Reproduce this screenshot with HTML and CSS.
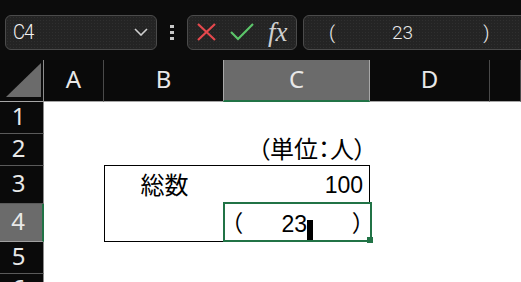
FILE: index.html
```html
<!DOCTYPE html>
<html lang="ja">
<head>
  <meta charset="UTF-8">
  <title>総数</title>
  <link rel="stylesheet" href="styles.css">
</head>
<body>
  <div class="toolbar">
    <div class="namebox">
      <span class="name">C4</span>
      <svg class="chevron" width="14" height="8" viewBox="0 0 14 8">
        <polyline points="1,1 7,7 13,1" fill="none" stroke="#cfcfcf" stroke-width="1.6"/>
      </svg>
    </div>
    <div class="grip"><i></i><i></i><i></i></div>
    <div class="fxbox">
      <svg class="icon" width="19" height="18" viewBox="0 0 19 18">
        <path d="M1 1 L18 17 M18 1 L1 17" stroke="#e5484d" stroke-width="2.2" fill="none"/>
      </svg>
      <svg class="icon check" width="24" height="18" viewBox="0 0 24 18">
        <polyline points="1,9 8,16 23,1" fill="none" stroke="#5cc56a" stroke-width="2.2"/>
      </svg>
      <span class="fx">fx</span>
    </div>
    <div class="formula">
      <span>(</span>
      <span class="f-num">23</span>
      <span class="f-close">)</span>
    </div>
  </div>

  <div class="sheet">
    <div class="row head-row">
      <div class="corner">
        <svg width="35" height="34" viewBox="0 0 35 34"><polygon points="0,34 35,34 35,0" fill="#6b6b6b"/></svg>
      </div>
      <div class="ch">A</div>
      <div class="ch">B</div>
      <div class="ch sel">C</div>
      <div class="ch">D</div>
      <div class="ch"></div>
    </div>
    <div class="row short">
      <div class="rh">1</div>
    </div>
    <div class="row short">
      <div class="rh">2</div>
      <div class="cell unit">（単位：人）</div>
    </div>
    <div class="row tall">
      <div class="rh">3</div>
      <div class="cell label">総数</div>
      <div class="cell total">100</div>
    </div>
    <div class="row tall">
      <div class="rh sel">4</div>
      <div class="cell label-bottom"></div>
      <div class="cell active">
        <span class="paren">（</span>
        <span class="num">23</span>
        <span class="caret"></span>
        <span class="paren close">）</span>
        <span class="handle"></span>
      </div>
    </div>
    <div class="row short">
      <div class="rh">5</div>
    </div>
    <div class="row short">
      <div class="rh">6</div>
    </div>
  </div>
</body>
</html>
```

FILE: styles.css
```css
body {
  margin: 0;
  width: 521px;
  height: 282px;
  overflow: hidden;
  background-color: #0c0c0c;
  font-family: "Noto Sans", sans-serif;
}

/* 数式バー */
.toolbar {
  display: flex;
  align-items: center;
  height: 60px;
  padding: 4px 0 0 5px;
  box-sizing: border-box;
}

.toolbar > * {
  flex-shrink: 0;
}

.namebox,
.fxbox,
.formula {
  height: 35px;
  box-sizing: border-box;
  border: 1px solid #4b4b4b;
  border-radius: 6px;
  background-color: #242424;
  background-image: radial-gradient(#2f2f2f 0.6px, transparent 0.8px);
  background-size: 3px 3px;
  display: flex;
  align-items: center;
}

.namebox {
  width: 152px;
  justify-content: space-between;
  padding: 0 8px 0 7px;
}

.name {
  font-family: "Roboto", sans-serif;
  font-weight: 300;
  font-size: 21px;
  letter-spacing: -1px;
  transform: scaleX(0.88);
  transform-origin: left center;
  color: #f4f4f4;
}

.grip {
  display: flex;
  flex-direction: column;
  gap: 3px;
  margin: 0 13px;
}

.grip i {
  width: 4px;
  height: 3px;
  background-color: #c8c8c8;
}

.fxbox {
  width: 110px;
  padding-left: 9px;
}

.check {
  margin-left: 14px;
}

.fx {
  margin-left: 14px;
  font-family: "Liberation Serif", serif;
  font-style: italic;
  font-size: 27px;
  line-height: 1;
  color: #cfcfcf;
}

.formula {
  margin-left: 6px;
  width: 240px;
  padding-left: 25px;
  font-family: "Roboto", sans-serif;
  font-weight: 300;
  font-size: 19px;
  color: #ececec;
}

.f-num {
  margin-left: 57px;
}

.f-close {
  margin-left: 70px;
}

/* シート */
.row {
  display: grid;
  grid-template-columns: 44px 60px 120px 146px 120px 1fr;
  grid-template-rows: 100%;
  background-color: #fff;
}

.row.short {
  height: 32px;
}

.row.tall {
  height: 38px;
}

.head-row {
  height: 42px;
  background-color: #0a0a0a;
}

.corner,
.ch,
.rh {
  box-sizing: border-box;
  background-color: #0a0a0a;
  color: #e8e8e8;
  font-family: "Noto Sans", sans-serif;
  font-size: 24px;
  line-height: 1;
  display: flex;
  align-items: center;
  justify-content: center;
}

.corner {
  border-right: 1px solid #8c8c8c;
  border-bottom: 1px solid #a6a6a6;
  align-items: flex-end;
  justify-content: flex-start;
  padding: 0 0 4px 6px;
}

.corner svg {
  display: block;
}

.ch {
  border-right: 1px solid #4a4a4a;
  border-bottom: 1px solid #a6a6a6;
  padding-bottom: 3px;
}

.ch.sel {
  background-color: #6b6b6b;
  border-left: 1px solid #a8a8a8;
  border-right-color: #a8a8a8;
  border-bottom: 2px solid #217346;
  margin-left: -1px;
}

.rh {
  grid-column: 1;
  border-right: 1px solid #8c8c8c;
  border-bottom: 1px solid #5a5a5a;
  padding: 0 6px 4px 0;
}

.rh.sel {
  background-color: #6b6b6b;
  border-right: 2px solid #217346;
  border-bottom-color: #a0a0a0;
}

/* セル */
.cell {
  box-sizing: border-box;
  display: flex;
  align-items: flex-end;
  font-family: "Liberation Sans", "Noto Sans CJK JP", sans-serif;
  font-size: 23px;
  line-height: 1;
  color: #000;
  font-feature-settings: "palt";
}

.unit {
  grid-column: 4;
  justify-content: flex-end;
  padding: 0 4px 4px 0;
  font-size: 24px;
}

.label {
  grid-column: 3;
  justify-content: center;
  margin-top: -1px;
  border-left: 1px solid #000;
  border-top: 1px solid #000;
  padding-bottom: 6px;
  font-size: 24px;
}

.total {
  grid-column: 4;
  justify-content: flex-end;
  margin-top: -1px;
  border-top: 1px solid #000;
  border-right: 1px solid #000;
  border-bottom: 1px solid #000;
  padding: 0 6px 6px 0;
}

.label-bottom {
  grid-column: 3;
  border-left: 1px solid #000;
  border-bottom: 1px solid #000;
}

.active {
  grid-column: 4;
  position: relative;
  border-bottom: 1px solid #000;
  padding: 0 6px 5px 7px;
}

.active::after {
  content: "";
  position: absolute;
  top: -2px;
  left: -1px;
  right: -2px;
  bottom: -1px;
  border: 2px solid #217346;
}

.num {
  margin-left: 39px;
}

.caret {
  width: 6px;
  height: 21px;
  margin: 0 0 -5px 0;
  background-color: #000;
}

.close {
  margin-left: auto;
}

.handle {
  position: absolute;
  right: -3px;
  bottom: -2px;
  width: 6px;
  height: 6px;
  background-color: #217346;
  z-index: 1;
}
```
